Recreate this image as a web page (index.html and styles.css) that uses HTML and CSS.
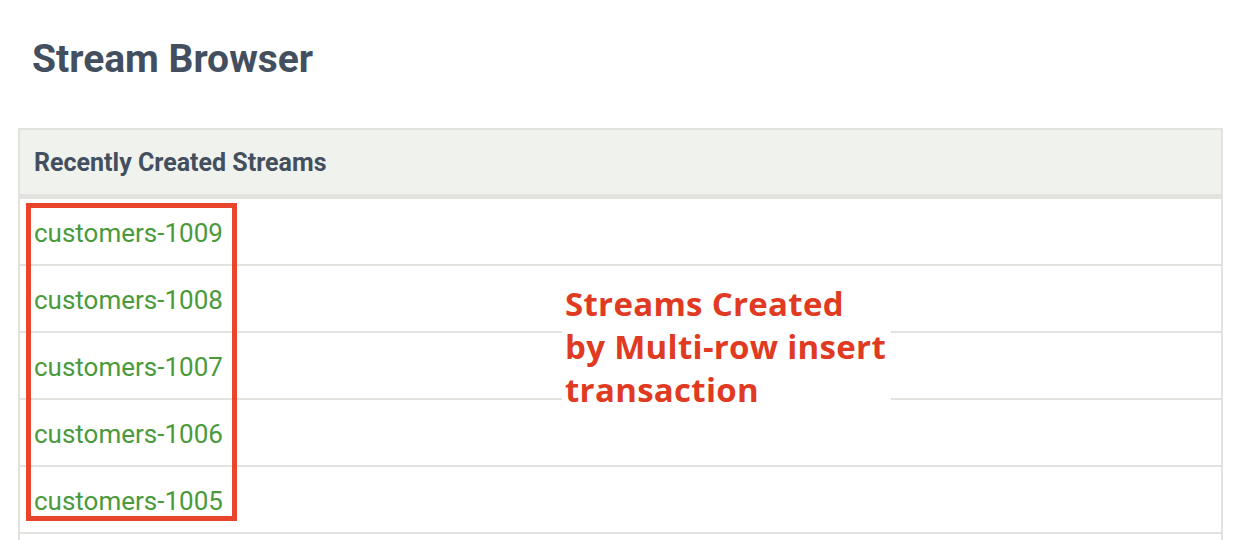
FILE: index.html
```html
<!DOCTYPE html>
<html>
<head>
<meta charset="utf-8">
<link rel="stylesheet" href="styles.css">
</head>
<body>
<div class="page">
  <h1 class="title">Stream Browser</h1>
  <div class="panel">
    <div class="panel-head">Recently Created Streams</div>
    <ul class="list">
      <li class="row"><a class="link" href="#">customers-1009</a></li>
      <li class="row"><a class="link" href="#">customers-1008</a></li>
      <li class="row"><a class="link" href="#">customers-1007</a></li>
      <li class="row"><a class="link" href="#">customers-1006</a></li>
      <li class="row"><a class="link" href="#">customers-1005</a></li>
      <li class="row"></li>
    </ul>
  </div>
  <div class="highlight"></div>
  <div class="note">Streams Created<br>by Multi-row insert<br>transaction</div>
</div>
</body>
</html>
```
FILE: styles.css
```css
html, body {
  margin: 0;
  padding: 0;
  background: #ffffff;
  overflow: hidden;
}
.page {
  position: relative;
  width: 1248px;
  height: 540px;
  overflow: hidden;
  font-family: Roboto, "Liberation Sans", sans-serif;
}
.title {
  margin: 0;
  padding: 35px 0 0 32px;
  height: 128px;
  box-sizing: border-box;
  font-size: 39px;
  font-weight: 700;
  color: #434f5e;
  line-height: 48px;
}
.panel {
  margin-left: 18px;
  width: 1205px;
  box-sizing: border-box;
  border: 2px solid #e2e3df;
  border-bottom: none;
}
.panel-head {
  height: 64px;
  background: #f0f2ee;
  border-bottom: 5px solid #e2e3df;
  display: flex;
  align-items: center;
  padding-left: 14px;
  font-size: 25px;
  font-weight: 700;
  color: #434f5e;
}
.list {
  list-style: none;
  margin: 0;
  padding: 0;
}
.row {
  height: 63px;
  padding-top: 2px;
  padding-left: 14px;
  border-bottom: 2px solid #e2e3df;
  display: flex;
  align-items: center;
}
.link {
  color: #4a9a3c;
  text-decoration: none;
  font-size: 26px;
  font-weight: 400;
}
.highlight {
  position: absolute;
  left: 26px;
  top: 203px;
  width: 211px;
  height: 318px;
  box-sizing: border-box;
  border: 5px solid #e8452c;
}
.note {
  position: absolute;
  left: 562px;
  top: 282px;
  width: 329px;
  padding: 0 0 4px 3px;
  box-sizing: border-box;
  background: #ffffff;
  font-family: "Open Sans", Lato, sans-serif;
  font-weight: 700;
  font-size: 33px;
  letter-spacing: 0.3px;
  line-height: 43px;
  color: #e03a22;
  white-space: nowrap;
}
```
